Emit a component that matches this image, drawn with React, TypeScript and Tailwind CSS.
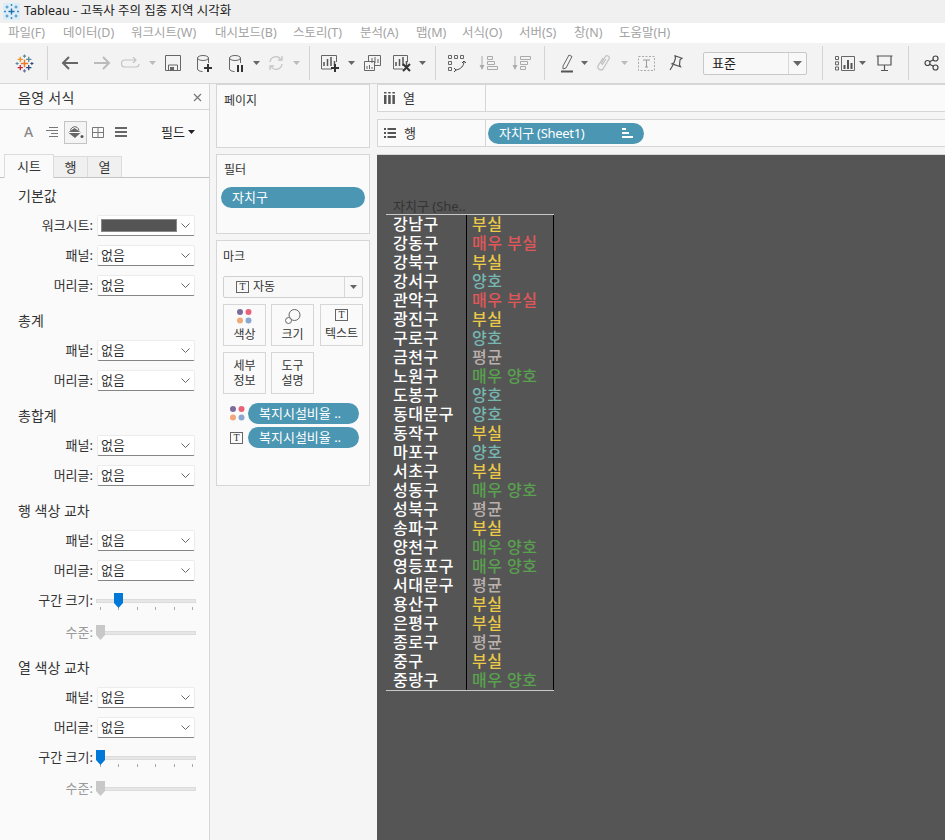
import React from 'react';

const FONT = "font-['Noto_Sans','Noto_Sans_CJK_KR',sans-serif]";

const Sep = ({ className }: { className: string }) => (
  <div className={`h-[34px] w-px shrink-0 bg-[#d4d4d4] ${className}`} />
);

const Caret = ({ w, color = '#666' }: { w: string; color?: string }) => (
  <div className={`flex shrink-0 justify-center ${w}`}>
    <svg width="7" height="4" viewBox="0 0 7 4"><path d="M0 0h7L3.5 4z" fill={color} /></svg>
  </div>
);

const Slot = ({ w, children }: { w: string; children: React.ReactNode }) => (
  <div className={`flex shrink-0 items-center justify-center ${w}`}>{children}</div>
);

const Svg = ({ w = 20, h = 20, children }: { w?: number; h?: number; children: React.ReactNode }) => (
  <svg width={w} height={h} viewBox={`0 0 ${w} ${h}`} fill="none" stroke="#666" strokeWidth="1">
    {children}
  </svg>
);

const Plus = ({ x, y }: { x: number; y: number }) => (
  <path d={`M${x} ${y - 4}v8M${x - 4} ${y}h8`} stroke="#333" strokeWidth="2" />
);

const cross = (x: number, y: number, arm: number) =>
  `M${x} ${y - arm}v${arm * 2}M${x - arm} ${y}h${arm * 2}`;

const TableauLogo = () => (
  <svg width="19" height="19" viewBox="0 0 18 18" fill="none">
    <path d={cross(5, 5, 2.5)} stroke="#eb912b" strokeWidth="1.2" />
    <path d={cross(13, 5, 2.5)} stroke="#5b879b" strokeWidth="1.2" />
    <path d={cross(5, 13, 2.5)} stroke="#c72035" strokeWidth="1.2" />
    <path d={cross(13, 13, 2.5)} stroke="#1f447e" strokeWidth="1.2" />
    <path d={cross(9, 2, 1.5)} stroke="#5b879b" />
    <path d={cross(9, 16, 1.5)} stroke="#6a6fa8" />
    <path d={cross(2, 9, 1.5)} stroke="#59879b" />
    <path d={cross(16, 9, 1.5)} stroke="#2c4a7e" />
    <path d={cross(9, 9, 3.5)} stroke="#e8762b" strokeWidth="1.4" />
  </svg>
);

const TitleIcon = () => (
  <svg width="17" height="17" viewBox="0 0 17 17" fill="none">
    <rect width="17" height="17" fill="#dcedf8" />
    <path d={cross(8.5, 8.5, 3)} stroke="#1f6fa8" strokeWidth="1.4" />
    <path d={cross(4, 4, 1.5)} stroke="#3a8cc4" />
    <path d={cross(13, 4, 1.5)} stroke="#3a8cc4" />
    <path d={cross(4, 13, 1.5)} stroke="#3a8cc4" />
    <path d={cross(13, 13, 1.5)} stroke="#3a8cc4" />
    <path d={cross(8.5, 2, 1)} stroke="#3a8cc4" />
    <path d={cross(8.5, 15, 1)} stroke="#3a8cc4" />
    <path d={cross(2, 8.5, 1)} stroke="#3a8cc4" />
    <path d={cross(15, 8.5, 1)} stroke="#3a8cc4" />
  </svg>
);

const Bars = ({ x = 4, y = 4 }: { x?: number; y?: number }) => (
  <g stroke="#555" strokeWidth="1.5">
    <path d={`M${x} ${y + 10}v-4M${x + 3.5} ${y + 10}v-7M${x + 7} ${y + 10}v-9M${x + 10.5} ${y + 10}v-5`} />
  </g>
);

const Cylinder = () => (
  <>
    <ellipse cx="7" cy="4" rx="5.5" ry="2.5" />
    <path d="M1.5 4v11c0 1.5 2.5 2.5 5 2.5M12.5 4v5" />
  </>
);

const Toolbar = () => (
  <div className="flex h-[41px] items-center border-b border-[#d6d6d6] bg-[#f3f3f3] pl-2">
    <Slot w="w-8">
      <TableauLogo />
    </Slot>
    <Sep className="ml-[7px]" />
    <Slot w="w-8 ml-[6px]">
      <svg width="18" height="16" viewBox="0 0 18 16" fill="none" stroke="#666" strokeWidth="2"><path d="M17 8H2M8 2 2 8l6 6" /></svg>
    </Slot>
    <Slot w="w-8">
      <svg width="18" height="16" viewBox="0 0 18 16" fill="none" stroke="#bbb" strokeWidth="2"><path d="M1 8h15M10 2l6 6-6 6" /></svg>
    </Slot>
    <Slot w="w-[26px]">
      <svg width="20" height="12" viewBox="0 0 20 12" fill="none" stroke="#c4c4c4" strokeWidth="1.2"><path d="M14 3H4a3 3 0 0 0 0 7h11a3 3 0 0 0 3-3M12 0l3 3-3 3" /></svg>
    </Slot>
    <Caret w="w-4" color="#bbb" />
    <Slot w="w-[26px]">
      <Svg w={16} h={16}>
        <path d="M.5.5h15v15H.5zM3.5 15v-5h9v5" />
        <path d="M5 12h4v3H5z" fill="#666" stroke="none" />
      </Svg>
    </Slot>
    <Slot w="w-[38px]">
      <Svg w={18} h={19}>
        <Cylinder />
        <Plus x={12} y={14} />
      </Svg>
    </Slot>
    <Slot w="w-[26px]">
      <Svg w={18} h={19}>
        <Cylinder />
        <path d="M10 11v7M14 11v7" stroke="#333" strokeWidth="2" />
      </Svg>
    </Slot>
    <Caret w="w-3" />
    <Slot w="w-7">
      <svg width="16" height="16" viewBox="0 0 16 16" fill="none" stroke="#c4c4c4" strokeWidth="1.3"><path d="M2 7a6 6 0 0 1 11-2.5M14 9a6 6 0 0 1-11 2.5" /><path d="M14 1v4h-4M2 15v-4h4" /></svg>
    </Slot>
    <Caret w="w-3" color="#bbb" />
    <Sep className="ml-[7px]" />
    <Slot w="w-[35px] pl-[6px]">
      <Svg w={19} h={19}>
        <path d="M11 15H.5V1.5h15V8" />
        <Bars x={3} y={2} />
        <Plus x={14} y={14} />
      </Svg>
    </Slot>
    <Caret w="w-3" />
    <Slot w="w-[30px]">
      <Svg w={17} h={17}>
        <path d="M4.5 6V.5h12v10H11" />
        <path d="M.5 6.5h10v9H.5z" fill="#f3f3f3" />
        <path d="M8 8V3M11 8V2M14 8V4M3 14v-3M5.500 14v-4M8 14v-2" strokeWidth="1" />
      </Svg>
    </Slot>
    <Slot w="w-[30px]">
      <Svg w={19} h={19}>
        <path d="M10 15H.5V1.5h14V8" />
        <Bars x={3} y={2} />
        <path d="M10 10l7 7M17 10l-7 7" stroke="#333" strokeWidth="2" />
      </Svg>
    </Slot>
    <Caret w="w-[11px]" />
    <Sep className="ml-[7px]" />
    <Slot w="w-[41px]">
      <Svg w={18} h={17}>
        <path d="M.5.5h3v3h-3zM6.500.5h3v3h-3zM12.500.5h3v3h-3zM.5 6.500h3v3h-3zM.5 12.500h3v3h-3z" />
        <path d="M16 6c0 5-3 8-8 9M6 13l2 2-2 2M14 8l2-2 2 2" stroke="#444" />
      </Svg>
    </Slot>
    <Slot w="w-[22px]">
      <svg width="19" height="16" viewBox="0 0 19 16" fill="none" stroke="#aaa"><path d="M3 1v10" /><path d="M.5 10h5L3 15z" fill="#aaa" stroke="none" /><path d="M8.500 1.500h5v3h-5zM8.500 6.500h7v3h-7zM8.500 11.500h10v3h-10z" /></svg>
    </Slot>
    <Slot w="w-[22px] ml-[11px]">
      <svg width="19" height="16" viewBox="0 0 19 16" fill="none" stroke="#aaa"><path d="M3 1v10" /><path d="M.5 10h5L3 15z" fill="#aaa" stroke="none" /><path d="M8.500 1.500h10v3h-10zM8.500 6.500h7v3h-7zM8.500 11.500h5v3h-5z" /></svg>
    </Slot>
    <Sep className="ml-3" />
    <Slot w="w-[33px] pl-[11px]">
      <svg width="13" height="20" viewBox="0 0 13 20" fill="none" stroke="#666"><path d="M2 13 8 2l3 1.500L5 15l-3 1z" /><path d="M0 18.500h12" stroke="#555" strokeWidth="2" /></svg>
    </Slot>
    <Caret w="w-3" />
    <Slot w="w-7">
      <svg width="14" height="18" viewBox="0 0 14 18" fill="none" stroke="#c0c0c0" strokeWidth="1.2"><path d="M4 10 8 3a2.200 2.200 0 0 1 4 2l-6 10a3 3 0 0 1-5-3l5-8M5 11l4-6" /></svg>
    </Slot>
    <Caret w="w-3" color="#bbb" />
    <Slot w="w-8">
      <svg width="17" height="15" viewBox="0 0 17 15" fill="none" stroke="#aaa"><path d="M.5.5h16v14H.5z" strokeDasharray="2 1.5" /><path d="M5 4h7M8.500 4v7M7 11h3" stroke="#999" /></svg>
    </Slot>
    <Slot w="w-7">
      <svg width="14" height="16" viewBox="0 0 14 16" fill="none" stroke="#555" strokeWidth="1.2"><path d="M6 .8l7 2.500-2 1.500-.5 5 1 2-8.500-3 2-1 1.500-4.500zM4 10 1 15" /></svg>
    </Slot>
    <div className="ml-[13px] flex h-[23px] w-[104px] shrink-0 items-center rounded-[2px] border border-[#c8c8c8] bg-[#f8f8f8]">
      <span className="flex-1 pl-2 text-[13px] leading-none text-[#222]">표준</span>
      <div className="flex h-full w-[18px] items-center justify-center border-l border-[#d8d8d8]">
        <svg width="9" height="5" viewBox="0 0 9 5"><path d="M0 0h9L4.500 5z" fill="#666" /></svg>
      </div>
    </div>
    <Sep className="ml-[15px]" />
    <Slot w="w-[33px] pl-[11px]">
      <Svg w={21} h={15}>
        <path d="M.5.5h3v3h-3zM.5 5.800h3v3h-3zM.5 11h3v3h-3zM6.500.5h13v14h-13z" />
        <path d="M9.500 13V9M13 13V4M16.500 13V7" stroke="#555" strokeWidth="2" />
      </Svg>
    </Slot>
    <Caret w="w-3" />
    <Slot w="w-8">
      <Svg w={17} h={17}>
        <path d="M.5 1h16M2 1v9h13V1M8.500 10v5M5 15.500h7" stroke="#555" strokeWidth="1.2" />
      </Svg>
    </Slot>
    <Sep className="ml-2" />
    <Slot w="w-[44px]">
      <Svg w={15} h={16}>
        <circle cx="11.500" cy="3.500" r="2.500" stroke="#444" strokeWidth="1.2" />
        <circle cx="3.500" cy="8" r="2.500" stroke="#444" strokeWidth="1.2" />
        <circle cx="11.500" cy="12.500" r="2.500" stroke="#444" strokeWidth="1.2" />
        <path d="M5.600 6.800l3.800-2.100M5.600 9.200l3.800 2.100" stroke="#444" strokeWidth="1.2" />
      </Svg>
    </Slot>
  </div>
);

const Combo = ({ swatch }: { swatch?: boolean }) => (
  <div className="flex h-[21px] w-[98px] items-center justify-between rounded-[2px] border border-[#ececec] border-b-[#858585] bg-white pl-[3px] pr-[4px] text-[13px] leading-none text-[#333]">
    {swatch ? <div className="h-[13px] w-[76px] border border-[#888] bg-[#555555]" /> : <span>없음</span>}
    <svg width="9" height="5" viewBox="0 0 9 5" fill="none" stroke="#666"><path d="M.5.5l4 4 4-4" /></svg>
  </div>
);

const Row = ({ label, children, dim, className = '' }: { label: string; children: React.ReactNode; dim?: boolean; className?: string }) => (
  <div className={`flex h-[21px] items-center ${className}`}>
    <span className={`w-[93px] whitespace-nowrap text-right text-[13px] leading-none ${dim ? 'text-[#9a9a9a]' : 'text-[#333]'}`}>{label}</span>
    <div className="ml-[4px]">{children}</div>
  </div>
);

const Slider = ({ pos, color = '#0078d7', ticks }: { pos: string; color?: string; ticks?: boolean }) => (
  <div className="relative -ml-px flex h-[21px] w-[100px] items-center">
    <div className="h-[4px] w-full border border-[#dcdcdc] bg-[#e6e6e6]" />
    {ticks && (
      <div className="absolute left-[4px] right-[3px] top-[17px] flex justify-between">
        {[0, 1, 2, 3, 4, 5].map((i) => <div key={i} className="h-[3px] w-px bg-[#aaa]" />)}
      </div>
    )}
    <svg className={`absolute top-[3px] ${pos}`} width="9" height="15" viewBox="0 0 9 15"><path d="M0 0h9v10l-4.500 5L0 10z" fill={color} /></svg>
  </div>
);

const Heading = ({ children, className = '' }: { children: string; className?: string }) => (
  <div className={`h-5 pl-[18px] text-[14px] leading-5 text-[#333] ${className}`}>{children}</div>
);

const FormatPanel = () => (
  <div className="w-[210px] shrink-0 border-r border-[#d6d6d6] bg-[#fafafa]">
    <div className="flex h-[26px] items-center justify-between border-b border-[#d6d6d6] pl-[18px] pr-[7px] pt-[2px] text-[14px] tracking-[0.3px] text-[#333]">
      <span>음영 서식</span>
      <svg width="9" height="9" viewBox="0 0 9 9" stroke="#777" strokeWidth="1.2"><path d="M1 1l7 7M8 1 1 8" /></svg>
    </div>
    <div className="flex h-[44px] items-center pl-[24px]">
      <span className="w-[10px] text-[14px] font-medium leading-none text-[#888]">A</span>
      <div className="ml-[12px] flex w-[12px] justify-center">
        <svg width="12" height="10" viewBox="0 0 12 10" stroke="#777"><path d="M3 .5h9M0 3.500h12M5 6.500h7M3 9.500h9" /></svg>
      </div>
      <div className="ml-[6px] flex h-[23px] w-[23px] items-center justify-center border border-[#c4c4c4] bg-[#f4f4f4]">
        <svg width="17" height="15" viewBox="0 0 17 15" fill="none">
          <path d="M1 7.500 7.500 3 14 7.500 8 13z" fill="#666" />
          <path d="M1.500 7.500h12" stroke="#fff" />
          <path d="M3.500 5.500C4 1 11 0 12 5.500" stroke="#666" />
          <circle cx="15" cy="11.500" r="1.500" fill="#555" />
        </svg>
      </div>
      <div className="ml-[5px] flex w-[12px] justify-center">
        <svg width="12" height="11" viewBox="0 0 12 11" fill="none" stroke="#777"><path d="M.5.5h11v10H.5zM6 .5v10M.5 5.500h11" /></svg>
      </div>
      <div className="ml-[11px] flex w-[12px] justify-center">
        <svg width="12" height="10" viewBox="0 0 12 10" stroke="#666" strokeWidth="2"><path d="M0 1h12M0 5h12M0 9h12" /></svg>
      </div>
      <span className="ml-[34px] flex items-center gap-[3px] whitespace-nowrap text-[13px] leading-none text-[#222]">
        필드
        <svg width="7" height="4" viewBox="0 0 7 4"><path d="M0 0h7L3.500 4z" fill="#222" /></svg>
      </span>
    </div>
    <div className="flex h-[24px] items-end border-b border-[#c4c4c4] pl-[4px] text-[13px] leading-none text-[#333]">
      <div className="-mb-px flex h-[24px] w-[50px] items-center justify-center border border-b-0 border-[#dcdcdc] bg-[#fafafa]">시트</div>
      <div className="flex h-[21px] w-[34px] items-center justify-center border border-b-0 border-l-0 border-[#dcdcdc] bg-[#f0f0f0]">행</div>
      <div className="flex h-[21px] w-[34px] items-center justify-center border border-b-0 border-l-0 border-[#dcdcdc] bg-[#f0f0f0]">열</div>
    </div>
    <div className="flex flex-col gap-[9px] pt-[8px]">
      <Heading>기본값</Heading>
      <Row label="워크시트:"><Combo swatch /></Row>
      <Row label="패널:"><Combo /></Row>
      <Row label="머리글:"><Combo /></Row>
      <Heading className="mt-[6px]">총계</Heading>
      <Row label="패널:"><Combo /></Row>
      <Row label="머리글:"><Combo /></Row>
      <Heading className="mt-[6px]">총합계</Heading>
      <Row label="패널:"><Combo /></Row>
      <Row label="머리글:"><Combo /></Row>
      <Heading className="mt-[6px]">행 색상 교차</Heading>
      <Row label="패널:"><Combo /></Row>
      <Row label="머리글:"><Combo /></Row>
      <Row label="구간 크기:"><Slider pos="left-[18px]" ticks /></Row>
      <Row label="수준:" dim className="mt-[2px]"><Slider pos="left-0" color="#c8c8c8" /></Row>
      <Heading className="mt-[6px]">열 색상 교차</Heading>
      <Row label="패널:"><Combo /></Row>
      <Row label="머리글:"><Combo /></Row>
      <Row label="구간 크기:"><Slider pos="left-0" ticks /></Row>
      <Row label="수준:" dim className="mt-[1px]"><Slider pos="left-0" color="#c8c8c8" /></Row>
    </div>
  </div>
);

const Dots = () => (
  <svg width="15" height="15" viewBox="0 0 15 15">
    <circle cx="3" cy="3" r="3" fill="#7e6b9e" />
    <circle cx="11.500" cy="3" r="3" fill="#e8637a" />
    <circle cx="3" cy="11.500" r="3" fill="#f0a878" />
    <circle cx="11.500" cy="11.500" r="3" fill="#8aa8cf" />
  </svg>
);

const TBox = () => (
  <div className="flex h-[12px] w-[13px] items-center justify-center border border-[#666] font-['Liberation_Serif',serif] text-[10px] leading-none text-[#333]">T</div>
);

const Pill = ({ w, children, className = '' }: { w: string; children: React.ReactNode; className?: string }) => (
  <div className={`flex h-[21px] items-center rounded-full bg-[#4b97b3] text-[13px] leading-none text-white ${w} ${className}`}>{children}</div>
);

const MarkButton = ({ children, className = '' }: { children: React.ReactNode; className?: string }) => (
  <div className={`flex h-[42px] w-[43px] flex-col items-center justify-center border border-[#d6d6d6] bg-[#fafafa] text-[12px] leading-[15px] text-[#333] ${className}`}>{children}</div>
);

const SideCards = () => (
  <div className="flex w-[167px] shrink-0 flex-col gap-[6px] bg-[#f5f5f5] pl-[6px] pr-[7px]">
    <div className="h-[64px] border border-[#d6d6d6] bg-[#fafafa] pl-[7px] pt-[7px] text-[12px] leading-[18px] text-[#333]">페이지</div>
    <div className="h-[80px] border border-[#d6d6d6] bg-[#fafafa] pl-[7px] pt-[6px] text-[12px] leading-[18px] text-[#333]">
      필터
      <Pill w="w-[144px] -ml-[3px] mt-[8px] pl-[11px]">자치구</Pill>
    </div>
    <div className="h-[246px] border border-[#d6d6d6] bg-[#fafafa] px-[6px] pt-[7px] text-[12px] leading-[18px] text-[#333]">
      마크
      <div className="mt-[10px] flex h-[22px] items-center rounded-[2px] border border-[#d0d0d0] bg-[#f8f8f8]">
        <div className="ml-[12px]"><TBox /></div>
        <span className="ml-[4px] flex-1">자동</span>
        <div className="flex h-full w-[18px] items-center justify-center border-l border-[#d8d8d8]">
          <svg width="7" height="4" viewBox="0 0 7 4"><path d="M0 0h7L3.500 4z" fill="#666" /></svg>
        </div>
      </div>
      <div className="mt-[6px] flex gap-[5px]">
        <MarkButton><Dots /><span className="mt-[3px]">색상</span></MarkButton>
        <MarkButton>
          <svg width="16" height="15" viewBox="0 0 16 15" fill="none" stroke="#666"><circle cx="9.500" cy="6" r="5.500" fill="#fafafa" /><circle cx="3.500" cy="11.500" r="3" fill="#fafafa" /></svg>
          <span className="mt-[3px]">크기</span>
        </MarkButton>
        <MarkButton className="ml-px"><TBox /><span className="mt-[5px]">텍스트</span></MarkButton>
      </div>
      <div className="mt-[6px] flex gap-[5px]">
        <MarkButton>세부<br />정보</MarkButton>
        <MarkButton>도구<br />설명</MarkButton>
      </div>
      <div className="mt-[9px] flex items-center gap-[3px] pl-[7px]">
        <Dots />
        <Pill w="w-[111px] pl-[11px] text-[12px]">복지시설비율 ..</Pill>
      </div>
      <div className="mt-[3px] flex items-center gap-[5px] pl-[7px]">
        <TBox />
        <Pill w="w-[111px] pl-[11px] text-[12px]">복지시설비율 ..</Pill>
      </div>
    </div>
  </div>
);

const COLORS: Record<string, string> = {
  '부실': 'text-[#edc948]',
  '매우 부실': 'text-[#e15759]',
  '양호': 'text-[#76b7b2]',
  '평균': 'text-[#bab0ac]',
  '매우 양호': 'text-[#59a14f]',
};

const RESULTS: [string, string][] = [
  ['강남구', '부실'], ['강동구', '매우 부실'], ['강북구', '부실'], ['강서구', '양호'], ['관악구', '매우 부실'],
  ['광진구', '부실'], ['구로구', '양호'], ['금천구', '평균'], ['노원구', '매우 양호'], ['도봉구', '양호'],
  ['동대문구', '양호'], ['동작구', '부실'], ['마포구', '양호'], ['서초구', '부실'], ['성동구', '매우 양호'],
  ['성북구', '평균'], ['송파구', '부실'], ['양천구', '매우 양호'], ['영등포구', '매우 양호'], ['서대문구', '평균'],
  ['용산구', '부실'], ['은평구', '부실'], ['종로구', '평균'], ['중구', '부실'], ['중랑구', '매우 양호'],
];

const Shelf = ({ label, icon, children }: { label: string; icon: React.ReactNode; children?: React.ReactNode }) => (
  <div className="flex h-[28px] border-y border-l border-[#d6d6d6] bg-[#fafafa]">
    <div className="flex w-[108px] shrink-0 items-center gap-[8px] border-r border-[#d6d6d6] pl-[6px] text-[13px] leading-none text-[#333]">
      {icon}
      {label}
    </div>
    <div className="flex flex-1 items-center pl-[2px]">{children}</div>
  </div>
);

const Canvas = () => (
  <div className="flex min-w-0 flex-1 flex-col gap-[7px]">
    <Shelf label="열" icon={<svg width="11" height="12" viewBox="0 0 11 12" fill="#555"><path d="M0 3h2.500v9H0zM4.200 3h2.500v9H4.200zM8.400 3h2.500v9H8.400zM0 0h2.500v1.500H0zM4.200 0h2.500v1.500H4.200zM8.400 0h2.500v1.500H8.400z" /></svg>} />
    <Shelf label="행" icon={<svg width="12" height="10" viewBox="0 0 12 10" fill="#555"><path d="M0 0h2v2H0zM3.500 0H12v2H3.500zM0 4h2v2H0zM3.500 4H12v2H3.500zM0 8h2v2H0zM3.500 8H12v2H3.500z" /></svg>}>
      <Pill w="w-[156px] pl-[11px] justify-between pr-[11px] text-[12px] tracking-[-0.3px]">
        <span>자치구 (Sheet1)</span>
        <svg width="11" height="10" viewBox="0 0 11 10" fill="#fff"><path d="M0 0h4v2H0zM0 4h7v2H0zM0 8h11v2H0z" /></svg>
      </Pill>
    </Shelf>
    <div className="flex-1 border-t border-[#d6d6d6] bg-[#555555] pl-[9px] pt-[44px]">
      <div className="h-[15px] whitespace-nowrap pl-[7px] text-[13px] leading-[15px] text-[#333]">자치구 (She..</div>
      <div className="w-[168px] border-y border-[#c8c8c8]">
        {RESULTS.map(([gu, grade]) => (
          <div key={gu} className="flex h-[19px] text-[16px] font-medium leading-[18px] tracking-[0.5px]">
            <div className="w-[81px] border-r border-black pl-[7px] text-white">{gu}</div>
            <div className={`flex-1 border-r border-black pl-[5px] ${COLORS[grade]}`}>{grade}</div>
          </div>
        ))}
      </div>
    </div>
  </div>
);

export default function App() {
  return (
    <div className={`flex h-[840px] w-[945px] flex-col overflow-hidden bg-[#f5f5f5] ${FONT}`}>
      <div className="flex h-[23px] items-center bg-[#f0f0f0] pl-[3px] text-[12.5px] leading-none text-[#222]">
        <TitleIcon />
        <span className="ml-[4px]">Tableau - 고독사 주의 집중 지역 시각화</span>
      </div>
      <div className="flex h-[20px] items-center bg-white pl-2 pt-px text-[12.5px] leading-none text-[#a3a3a3]">
        <span className="w-[55px]">파일(F)</span>
        <span className="w-[68px]">데이터(D)</span>
        <span className="w-[84px]">워크시트(W)</span>
        <span className="w-[78px]">대시보드(B)</span>
        <span className="w-[67px]">스토리(T)</span>
        <span className="w-[56px]">분석(A)</span>
        <span className="w-[46px]">맵(M)</span>
        <span className="w-[57px]">서식(O)</span>
        <span className="w-[55px]">서버(S)</span>
        <span className="w-[45px]">창(N)</span>
        <span>도움말(H)</span>
      </div>
      <Toolbar />
      <div className="flex min-h-0 flex-1">
        <FormatPanel />
        <SideCards />
        <Canvas />
      </div>
    </div>
  );
}
